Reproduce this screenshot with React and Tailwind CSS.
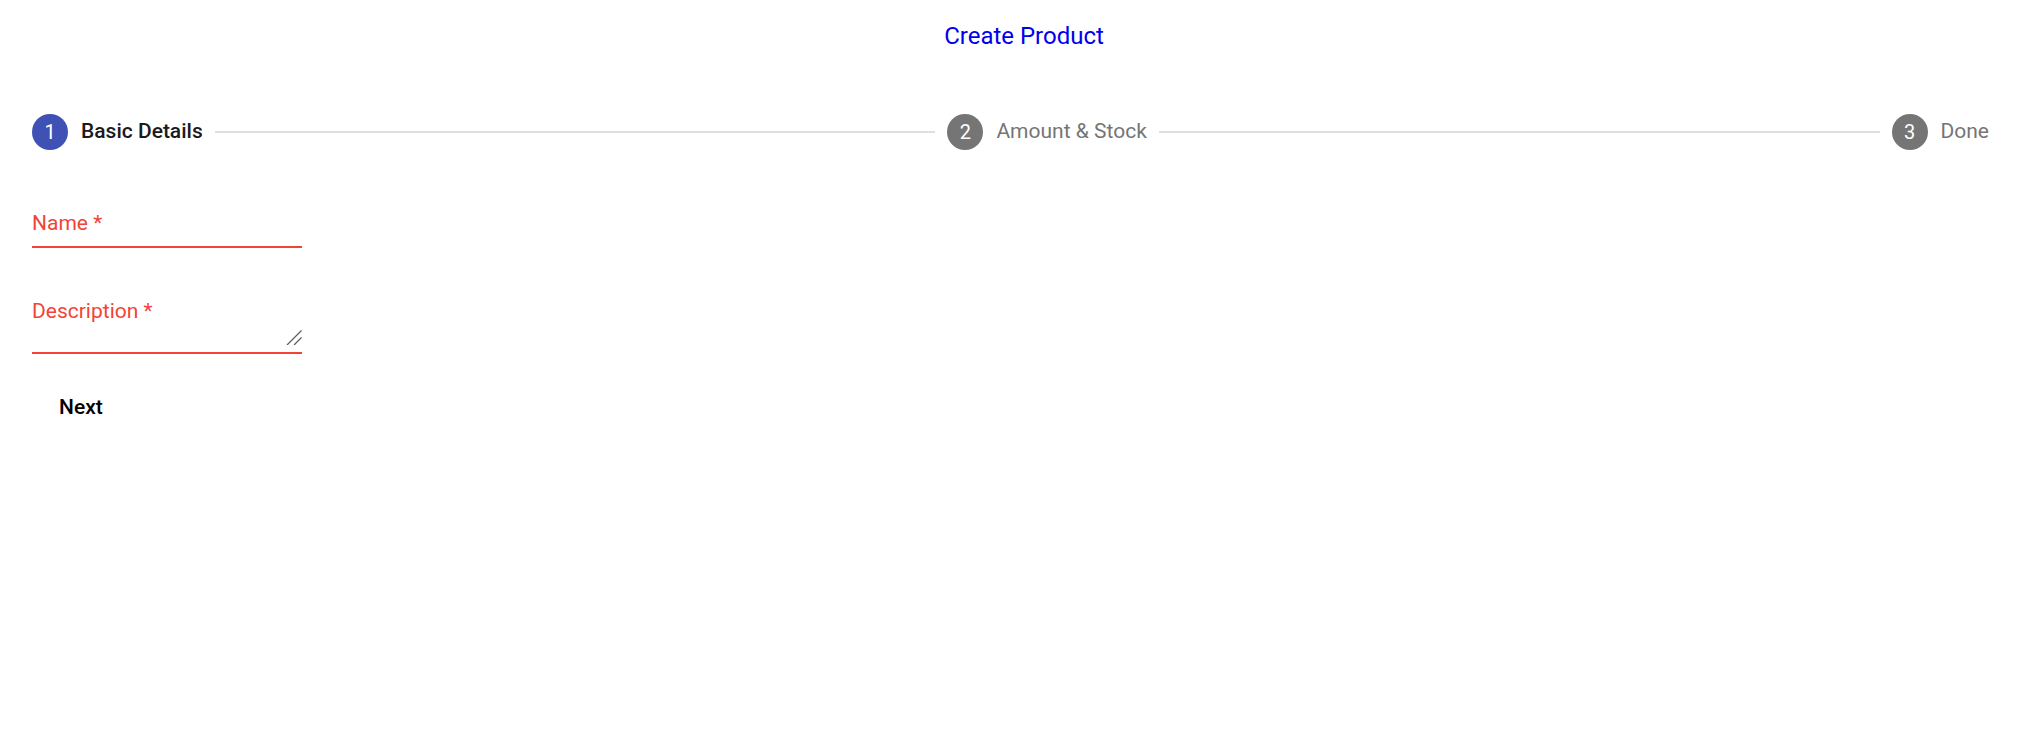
import React from "react";

const steps = [
  { n: 1, label: "Basic Details", active: true },
  { n: 2, label: "Amount & Stock" },
  { n: 3, label: "Done" },
];

function Step({ n, label, active }) {
  return (
    <div className="flex items-center shrink-0">
      <div
        className={
          "w-[36px] h-[36px] rounded-full flex items-center justify-center text-white text-[20px] " +
          (active ? "bg-[#3f51b5]" : "bg-[#757575]")
        }
      >
        {n}
      </div>
      <span
        className={
          "ml-[13px] text-[21px] " +
          (active ? "font-medium text-[#1a1a1a]" : "text-[#757575]")
        }
      >
        {label}
      </span>
    </div>
  );
}

function App() {
  return (
    <div className="min-h-screen bg-white font-['Roboto',sans-serif]">
      <h1 className="pt-[21px] pl-[18px] text-center text-[24px] leading-[30px] text-[#0000ee]">
        Create Product
      </h1>
      <div className="flex items-center gap-[12px] pl-[32px] pr-[41px] mt-[63px]">
        <Step {...steps[0]} />
        <div className="flex-1 h-[2px] bg-[#e0e0e0]" />
        <Step {...steps[1]} />
        <div className="flex-1 h-[2px] bg-[#e0e0e0]" />
        <Step {...steps[2]} />
      </div>
      <form className="pl-[32px] mt-[60px] flex flex-col">
        <label className="w-[270px] flex flex-col border-b-2 border-[#f44336]">
          <span className="text-[21px] leading-[26px] text-[#f44336]">Name *</span>
          <input className="h-[10px] outline-none" />
        </label>
        <label className="relative w-[270px] mt-[50px] flex flex-col border-b-2 border-[#f44336]">
          <span className="text-[21px] leading-[26px] text-[#f44336]">Description *</span>
          <textarea rows={1} className="h-[28px] outline-none resize-none" />
          <svg
            className="absolute right-0 bottom-[7px] w-[16px] h-[16px]"
            viewBox="0 0 16 16"
            fill="none"
            stroke="#5f5f5f"
            strokeWidth="1.3"
          >
            <path d="M1 16 L15.5 1.5" />
            <path d="M8 16 L15.5 8.5" />
          </svg>
        </label>
        <button
          type="button"
          className="self-start mt-[40px] ml-[27px] text-[21px] leading-[26px] font-medium text-black"
        >
          Next
        </button>
      </form>
    </div>
  );
}

export default App;
